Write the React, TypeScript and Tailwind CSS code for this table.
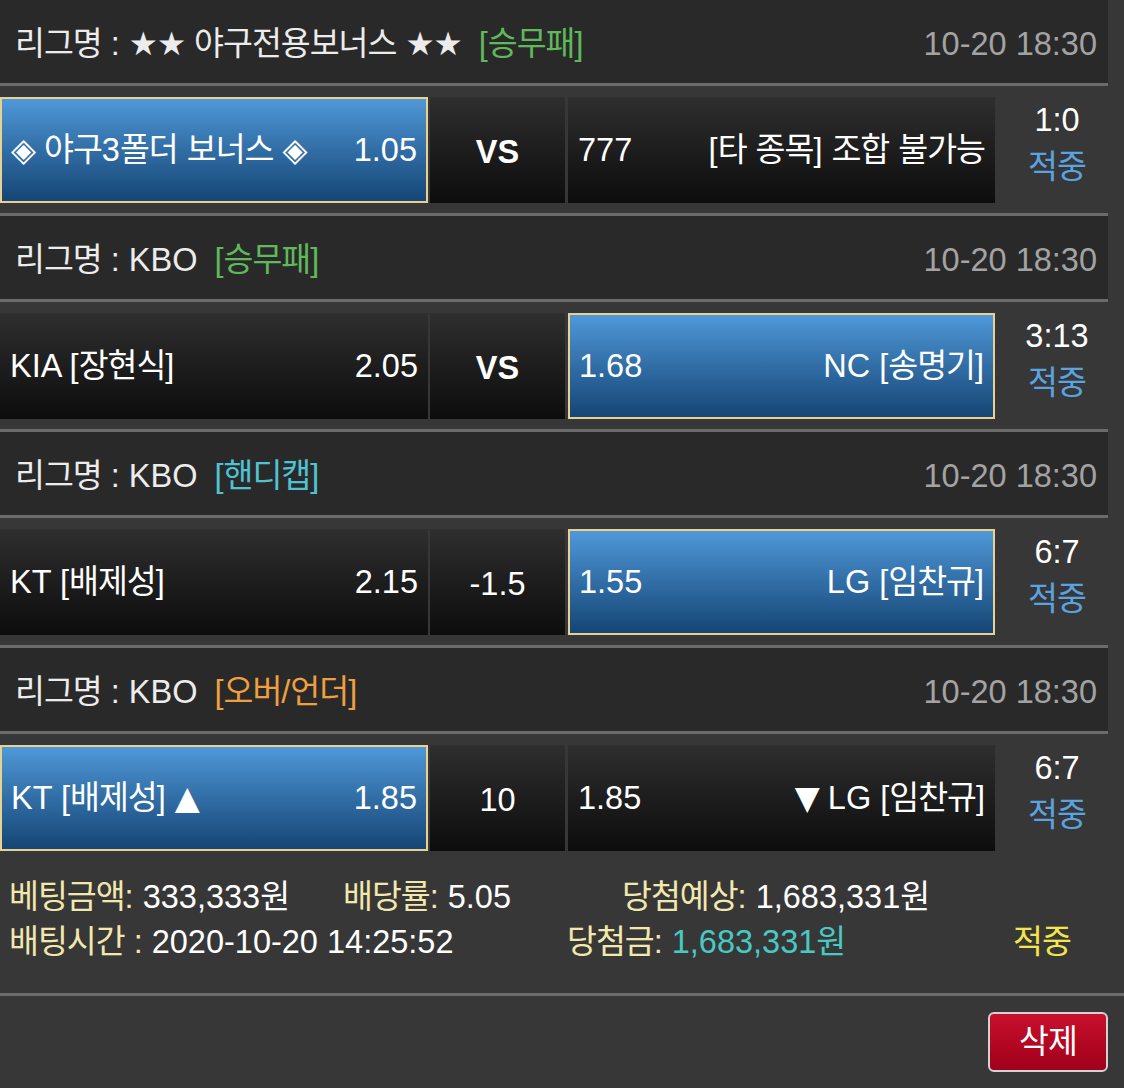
import React from "react";

const HANGUL = /[\uAC00-\uD7A3\u3130-\u318F]/;
const SYM = /[★◈▲▼]/;

function T({ s }: { s: string }) {
  const runs =
    s.match(/[\uAC00-\uD7A3\u3130-\u318F]+|[★◈▲▼]+|[^\uAC00-\uD7A3\u3130-\u318F★◈▲▼]+/g) || [];
  return (
    <>
      {runs.map((r, i) =>
        HANGUL.test(r) ? (
          <span key={i} className="tracking-[-1px]">
            {r}
          </span>
        ) : SYM.test(r) ? (
          <span key={i} className="font-['DejaVu_Sans',sans-serif] tracking-[-1px]">
            {r}
          </span>
        ) : (
          <span key={i}>{r}</span>
        )
      )}
    </>
  );
}

type Side = { a: string; b: string; sel?: boolean };
type Block = {
  league: string;
  tag: string;
  tagColor: string;
  left: Side;
  mid: string;
  midBold?: boolean;
  right: Side;
  score: string;
};

const blocks: Block[] = [
  {
    league: "★★ 야구전용보너스 ★★",
    tag: "[승무패]",
    tagColor: "text-[#5fb95a]",
    left: { a: "◈ 야구3폴더 보너스 ◈", b: "1.05", sel: true },
    mid: "VS",
    midBold: true,
    right: { a: "777", b: "[타 종목] 조합 불가능" },
    score: "1:0",
  },
  {
    league: "KBO",
    tag: "[승무패]",
    tagColor: "text-[#5fb95a]",
    left: { a: "KIA [장현식]", b: "2.05" },
    mid: "VS",
    midBold: true,
    right: { a: "1.68", b: "NC [송명기]", sel: true },
    score: "3:13",
  },
  {
    league: "KBO",
    tag: "[핸디캡]",
    tagColor: "text-[#4fc3d3]",
    left: { a: "KT [배제성]", b: "2.15" },
    mid: "-1.5",
    right: { a: "1.55", b: "LG [임찬규]", sel: true },
    score: "6:7",
  },
  {
    league: "KBO",
    tag: "[오버/언더]",
    tagColor: "text-[#eea040]",
    left: { a: "KT [배제성] ▲", b: "1.85", sel: true },
    mid: "10",
    right: { a: "1.85", b: "▼ LG [임찬규]" },
    score: "6:7",
  },
];

function Cell({ side, w }: { side: Side; w: string }) {
  const base = "flex items-center justify-between whitespace-pre " + w;
  const cls = side.sel
    ? base +
      " border-2 border-[#e9d28f] bg-linear-to-b from-[#4f98d8] to-[#154676] px-[9px]"
    : base + " bg-linear-to-b from-[#2f2f2f] to-[#0d0d0d] px-[10px]";
  return (
    <div className={cls}>
      <span>
        <T s={side.a} />
      </span>
      <span>
        <T s={side.b} />
      </span>
    </div>
  );
}

function Y({ s }: { s: string }) {
  return (
    <span className="text-[#f2e8ae]">
      <T s={s} />
    </span>
  );
}

export default function App() {
  return (
    <div className="min-h-screen w-[1124px] bg-[#373737] font-['Liberation_Sans','Noto_Sans_CJK_KR',sans-serif] text-[32.5px] text-white">
      <div className="w-[1108px]">
        {blocks.map((b, i) => (
          <div key={i}>
            <div className="h-[83px] bg-[#292929] flex items-center justify-between pl-[15px] pr-[11px] pt-[6px] whitespace-pre">
              <div className="text-[#ececec]">
                <T s={"리그명 : " + b.league + " "} />
                <span className={"ml-[8px] " + b.tagColor}>
                  <T s={b.tag} />
                </span>
              </div>
              <div className="text-[#a3a3a3]">10-20 18:30</div>
            </div>
            <div className="h-[3px] bg-[#6c6c6c]" />
            <div className="h-[127px] flex pt-[11px] pb-[10px]">
              <Cell side={b.left} w="w-[428px]" />
              <div className="w-[2px]" />
              <div
                className={
                  "w-[135px] flex items-center justify-center bg-linear-to-b from-[#2f2f2f] to-[#0d0d0d] pt-[4px] " +
                  (b.midBold ? "font-bold" : "")
                }
              >
                {b.mid}
              </div>
              <div className="w-[3px]" />
              <Cell side={b.right} w="w-[427px]" />
              <div className="flex-1 flex flex-col items-center justify-center pl-[11px] pb-[12px] leading-[47px]">
                <div>{b.score}</div>
                <div className="text-[#5aa3e0]">
                  <T s="적중" />
                </div>
              </div>
            </div>
            {i < blocks.length - 1 && <div className="h-[3px] bg-[#6c6c6c]" />}
          </div>
        ))}
      </div>
      <div className="h-[132px] pt-[14px] pl-[9px] leading-[45px] whitespace-pre">
        <div className="flex">
          <span className="w-[334px]">
            <Y s="베팅금액:" /> <T s="333,333원" />
          </span>
          <span className="w-[279px]">
            <Y s="배당률:" /> 5.05
          </span>
          <span>
            <Y s="당첨예상:" /> <T s="1,683,331원" />
          </span>
        </div>
        <div className="flex">
          <span className="w-[558px]">
            <Y s="배팅시간 :" /> 2020-10-20 14:25:52
          </span>
          <span className="w-[446px]">
            <Y s="당첨금:" />{" "}
            <span className="text-[#48c9c3]">
              <T s="1,683,331원" />
            </span>
          </span>
          <span className="text-[#f3e64c]">
            <T s="적중" />
          </span>
        </div>
      </div>
      <div className="h-[3px] bg-[#6c6c6c]" />
      <div className="flex justify-end pr-[16px] pt-[16px]">
        <button className="w-[120px] h-[60px] rounded-[6px] border-2 border-[#d2d2d2] bg-linear-to-b from-[#c8102c] to-[#a0001a] text-white flex items-center justify-center">
          <T s="삭제" />
        </button>
      </div>
    </div>
  );
}
